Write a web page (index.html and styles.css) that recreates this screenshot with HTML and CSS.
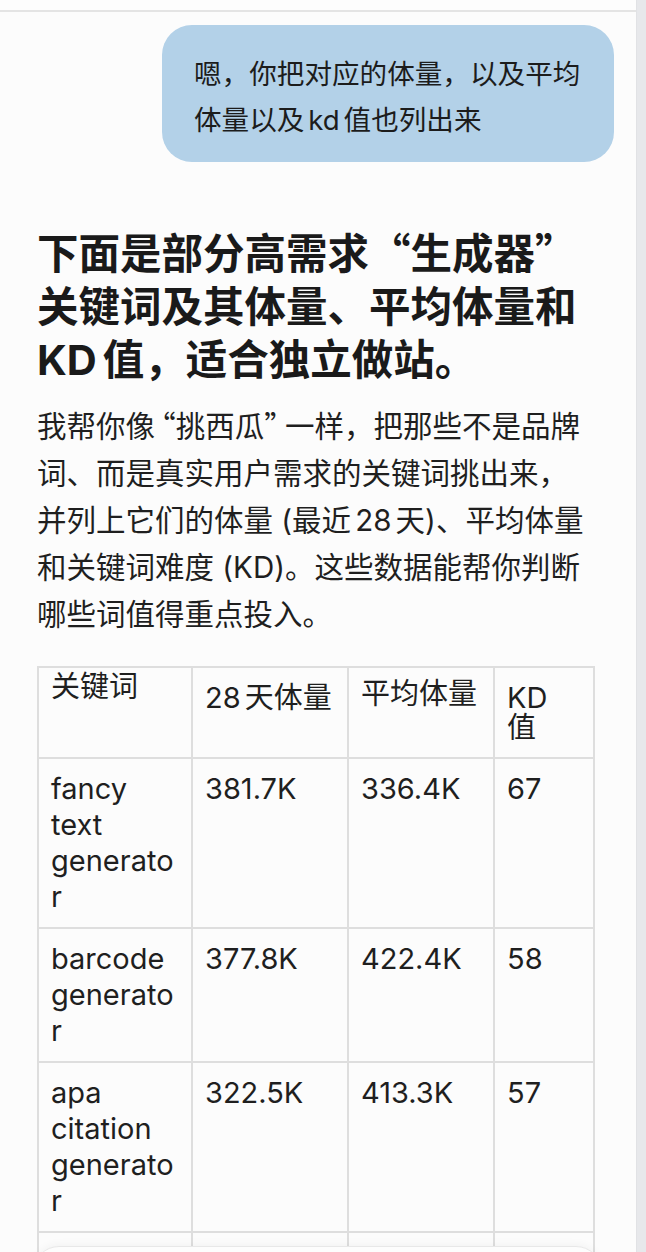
FILE: index.html
```html
<!DOCTYPE html>
<html lang="zh-CN">
<head>
<meta charset="utf-8">
<title>关键词</title>
<link rel="stylesheet" href="styles.css">
</head>
<body>
<div class="page">
  <main class="main">
    <div class="topbar"></div>
    <div class="thread">
      <div class="user-row">
        <div class="bubble">嗯，你把对应的体量，以及平均体量以及<span class="lat">kd</span>值也列出来</div>
      </div>
      <article class="answer">
        <h2 class="title">下面是部分高需求“生成器”关键词及其体量、平均体量和<span class="lat lead">KD</span>值，适合独立做站。</h2>
        <p class="intro">我帮你像<span class="q ql">“</span>挑西瓜<span class="q qr">”</span>一样，把那些不是品牌词、而是真实用户需求的关键词挑出来，并列上它们的体量<span class="paren"> (</span>最近<span class="lat">28</span>天<span class="paren">)</span>、平均体量和关键词难度<span class="paren"> (KD)</span>。这些数据能帮你判断哪些词值得重点投入。</p>
        <table class="kw">
          <colgroup>
            <col class="c1"><col class="c2"><col class="c3"><col class="c4">
          </colgroup>
          <thead>
            <tr>
              <th class="h-high">关键词</th>
              <th>28<span class="gap"></span>天体量</th>
              <th class="h-mid">平均体量</th>
              <th>KD<br>值</th>
            </tr>
          </thead>
          <tbody>
            <tr><td>fancy text generator</td><td>381.7K</td><td>336.4K</td><td>67</td></tr>
            <tr><td>barcode generator</td><td>377.8K</td><td>422.4K</td><td>58</td></tr>
            <tr><td>apa citation generator</td><td>322.5K</td><td>413.3K</td><td>57</td></tr>
            <tr><td>qr code generator</td><td>301.2K</td><td>298.7K</td><td>55</td></tr>
          </tbody>
        </table>
      </article>
    </div>
  </main>
  <div class="rail"></div>
</div>
<div class="composer"></div>
</body>
</html>
```

FILE: styles.css
```css
html, body {
  margin: 0;
  padding: 0;
}
body {
  background: #fcfcfc;
  color: #1f1f1f;
  font-family: "Noto Sans CJK SC", "Inter", sans-serif;
  height: 1252px;
  overflow: hidden;
}
.page {
  display: flex;
  height: 1252px;
}
.main {
  flex: 1;
  min-width: 0;
  display: flex;
  flex-direction: column;
}
.rail {
  width: 9px;
  flex: none;
  background: #e7e8eb;
  border-left: 1px solid #e1e2e5;
}
.topbar {
  height: 10px;
  flex: none;
  background: #fdfdfd;
  border-bottom: 2px solid #e4e4e4;
}
.thread {
  padding: 0 44px 0 37px;
}
.user-row {
  display: flex;
  justify-content: flex-end;
  margin-top: 13px;
  margin-right: -22px;
}
.bubble {
  box-sizing: border-box;
  width: 452px;
  height: 137px;
  padding: 24px 30px 21px 32px;
  background: #b3d1e8;
  border-radius: 30px;
  font-size: 27.6px;
  line-height: 46px;
  color: #1c1c1c;
}
.lat {
  font-family: "Inter", "Liberation Sans", sans-serif;
  margin: 0 0.14em;
  line-height: 1;
}
.lat.lead {
  margin-left: 0;
}
.q {
  font-feature-settings: "halt" 1;
  line-height: 1;
}
.ql { margin-left: 6px; }
.qr { margin-right: 6px; }
.paren {
  font-family: "Inter", "Liberation Sans", sans-serif;
  line-height: 1;
}
.answer {
  margin-top: 63px;
}
.title {
  margin: 0;
  font-size: 41.5px;
  line-height: 53px;
  font-weight: 700;
  color: #1a1a1a;
}
.intro {
  margin: 17px 0 0;
  font-size: 29.5px;
  line-height: 47px;
  color: #1f1f1f;
}
.kw {
  margin-top: 30px;
  width: 556px;
  table-layout: fixed;
  border-collapse: collapse;
  font-family: "Inter", "Noto Sans CJK SC", sans-serif;
  font-size: 29px;
  line-height: 36px;
  color: #1f1f1f;
}
.c1 { width: 154px; }
.c2 { width: 156px; }
.c3 { width: 146px; }
.c4 { width: 100px; }
.kw th, .kw td {
  border: 2px solid #dedede;
  padding: 12px;
  text-align: left;
  vertical-align: top;
  overflow-wrap: break-word;
  word-break: break-word;
}
.kw th {
  font-weight: 400;
  line-height: 30px;
  padding-top: 15px;
  padding-bottom: 14px;
}
.kw th.h-high { padding-top: 4px; }
.kw th.h-mid { padding-top: 11px; }
.gap {
  display: inline-block;
  width: 4px;
}
.composer {
  position: fixed;
  left: 33px;
  right: 44px;
  top: 1246px;
  height: 80px;
  background: #fdfdfd;
  border: 1px solid #e8e8e8;
  border-radius: 26px;
  box-shadow: 0 -2px 8px rgba(0, 0, 0, 0.04);
}
```
